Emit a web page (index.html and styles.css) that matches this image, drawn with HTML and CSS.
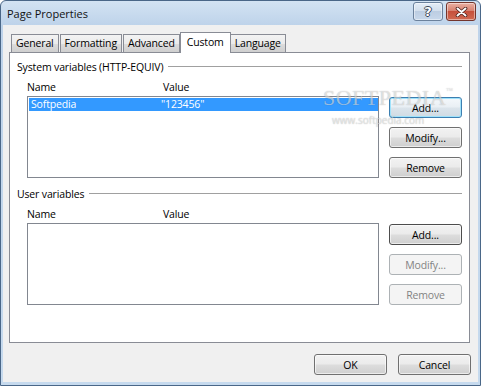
FILE: index.html
```html
<!DOCTYPE html>
<html lang="en">
<head>
  <meta charset="UTF-8" />
  <title>Page Properties</title>
  <link rel="stylesheet" href="styles.css">
</head>
<body>
<div class="window">
  <div class="titlebar">
    <span class="title">Page Properties</span>
    <div class="caption-buttons">
      <button class="cap help">?</button>
      <button class="cap close">
        <svg width="13" height="10" viewBox="0 0 13 10">
          <path d="M2.5 1.5 L10.5 8.5 M10.5 1.5 L2.5 8.5" stroke="#4a1f1a" stroke-width="3.6" stroke-linecap="round"/>
          <path d="M2.5 1.5 L10.5 8.5 M10.5 1.5 L2.5 8.5" stroke="#fff" stroke-width="2" stroke-linecap="round"/>
        </svg>
      </button>
    </div>
  </div>

  <div class="client">
    <div class="tabs">
      <div class="tab">General</div>
      <div class="tab">Formatting</div>
      <div class="tab">Advanced</div>
      <div class="tab active">Custom</div>
      <div class="tab">Language</div>
    </div>

    <div class="panel">
      <section class="group">
        <div class="group-title">System variables (HTTP-EQUIV)</div>
        <div class="cols"><span class="col-name">Name</span><span>Value</span></div>
        <div class="group-body">
          <div class="list">
            <div class="row selected"><span class="cell-name">Softpedia</span><span>"123456"</span></div>
          </div>
          <div class="actions">
            <button class="btn focus">Add...</button>
            <button class="btn">Modify...</button>
            <button class="btn">Remove</button>
          </div>
        </div>
      </section>

      <section class="group">
        <div class="group-title">User variables</div>
        <div class="cols"><span class="col-name">Name</span><span>Value</span></div>
        <div class="group-body">
          <div class="list"></div>
          <div class="actions">
            <button class="btn default">Add...</button>
            <button class="btn" disabled>Modify...</button>
            <button class="btn" disabled>Remove</button>
          </div>
        </div>
      </section>
    </div>

    <div class="footer">
      <button class="btn">OK</button>
      <button class="btn">Cancel</button>
    </div>
  </div>

  <div class="watermark">
    <span class="wm-logo">SOFTPEDIA<sup>™</sup></span>
    <span class="wm-url">www.softpedia.com</span>
  </div>
</div>
</body>
</html>
```

FILE: styles.css
```css
* {
  box-sizing: border-box;
}

body {
  margin: 0;
  font-family: "Open Sans", "Liberation Sans", sans-serif;
  font-size: 10.5px;
  letter-spacing: -0.15px;
  color: #000;
  background: #fff;
}

.window {
  position: relative;
  width: 481px;
  height: 386px;
  border: 1px solid #4a6788;
  border-radius: 6px 6px 0 0;
  background: linear-gradient(#d3e3f3, #bed3ea 24px, #c6daee);
  display: flex;
  flex-direction: column;
  overflow: hidden;
}

/* title bar */
.titlebar {
  height: 24px;
  display: flex;
  justify-content: space-between;
  padding: 0 4px 0 6px;
}

.title {
  font-size: 11px;
  letter-spacing: 0;
  line-height: 26px;
  color: #111;
}

.caption-buttons {
  display: flex;
  gap: 3px;
  padding-top: 1px;
}

.cap {
  width: 30px;
  height: 19px;
  border-radius: 3px;
  padding: 0;
  display: flex;
  align-items: center;
  justify-content: center;
  box-shadow: inset 0 0 0 1px rgba(255, 255, 255, 0.45);
}

.cap.help {
  border: 1px solid #6b819c;
  background: linear-gradient(#e4edf7, #d3dfed 45%, #bccde2 50%, #c8d8eb);
  color: #fff;
  font-family: "DejaVu Sans", sans-serif;
  font-size: 13px;
  font-weight: bold;
  text-shadow: 1px 0 0 #3b4656, -1px 0 0 #3b4656, 0 1px 0 #3b4656, 0 -1px 0 #3b4656;
}

.cap.close {
  border: 1px solid #74352c;
  background: linear-gradient(#eab0a3, #d88271 45%, #c6503c 50%, #d06a52);
}

/* client area */
.client {
  flex: 1;
  margin: 0 2px 3px;
  background: #f0f0f0;
  padding: 7px 8px 7px 6px;
  display: flex;
  flex-direction: column;
}

.tabs {
  display: flex;
  align-items: flex-end;
  height: 21px;
  margin-bottom: -1px;
  padding-left: 2px;
  position: relative;
  z-index: 1;
}

.tab {
  height: 18px;
  margin-bottom: 1px;
  margin-right: 1px;
  padding: 0 4px;
  line-height: 17px;
  border: 1px solid #898c95;
  border-bottom: none;
  background: linear-gradient(#f3f3f3, #ebebeb 50%, #dddddd 50%, #cfcfcf);
}

.tab.active {
  height: 21px;
  margin: 0 0 0 -1px;
  padding: 0 6px;
  line-height: 18px;
  background: #fff;
}

.tab.active + .tab {
  margin-left: -1px;
}

.panel {
  flex: 1;
  border: 1px solid #898c95;
  background: #fff;
  padding: 7px 7px 0 7px;
}

/* groups */
.group + .group {
  margin-top: 9px;
}

.group-title {
  display: flex;
  align-items: center;
  gap: 5px;
  height: 14px;
  line-height: 14px;
}

.group-title::after {
  content: "";
  flex: 1;
  border-top: 1px solid #a0a0a0;
  margin-top: -1px;
}

.cols {
  display: flex;
  height: 14px;
  line-height: 14px;
  margin: 6px 0 0 10px;
}

.col-name {
  width: 136px;
}

.group-body {
  display: flex;
  margin: 2px 0 0 10px;
}

.list {
  width: 352px;
  height: 82px;
  border: 1px solid #828790;
  background: #fff;
  padding: 1px 0 0 1px;
}

.row {
  display: flex;
  height: 13px;
  line-height: 13px;
  padding-left: 2px;
}

.row.selected {
  background: #3399ff;
  color: #fff;
}

.cell-name {
  width: 130px;
}

.actions {
  display: flex;
  flex-direction: column;
  gap: 9px;
  margin-left: 10px;
  padding-top: 1px;
}

/* push buttons */
.btn {
  width: 73px;
  height: 21px;
  padding: 0;
  font: inherit;
  letter-spacing: inherit;
  color: #000;
  border: 1px solid #707070;
  border-radius: 3px;
  background: linear-gradient(#f2f2f2, #ebebeb 48%, #dddddd 52%, #cfcfcf);
  box-shadow: inset 0 0 0 1px rgba(255, 255, 255, 0.6);
}

.btn.focus {
  border-color: #3c7fb1;
  background: linear-gradient(#f4f8fb, #e9eff4 48%, #dbe4eb 52%, #d0dbe3);
  box-shadow: inset 0 0 0 1px #9fe2fb;
}

.btn.default {
  border-color: #4d4d4d;
}

.btn:disabled {
  border-color: #adb2b5;
  background: #f4f4f4;
  color: #838383;
  box-shadow: none;
}

.footer {
  display: flex;
  justify-content: flex-end;
  gap: 11px;
  padding-top: 11px;
  margin-right: -1px;
}

/* watermark over the dialog */
.watermark {
  position: absolute;
  left: 322px;
  top: 84px;
  display: flex;
  flex-direction: column;
  align-items: center;
  pointer-events: none;
}

.wm-logo {
  font-family: "Liberation Serif", serif;
  font-size: 22px;
  letter-spacing: 0.5px;
  color: rgba(255, 255, 255, 0.55);
  text-shadow: 0 0 1px rgba(0, 0, 0, 0.3);
}

.wm-logo sup {
  font-size: 7px;
  vertical-align: 12px;
}

.wm-url {
  font-size: 10px;
  letter-spacing: 0;
  margin-top: 2px;
  margin-left: -20px;
  color: rgba(255, 255, 255, 0.6);
  text-shadow: 0 0 1px rgba(0, 0, 0, 0.35);
}
```
